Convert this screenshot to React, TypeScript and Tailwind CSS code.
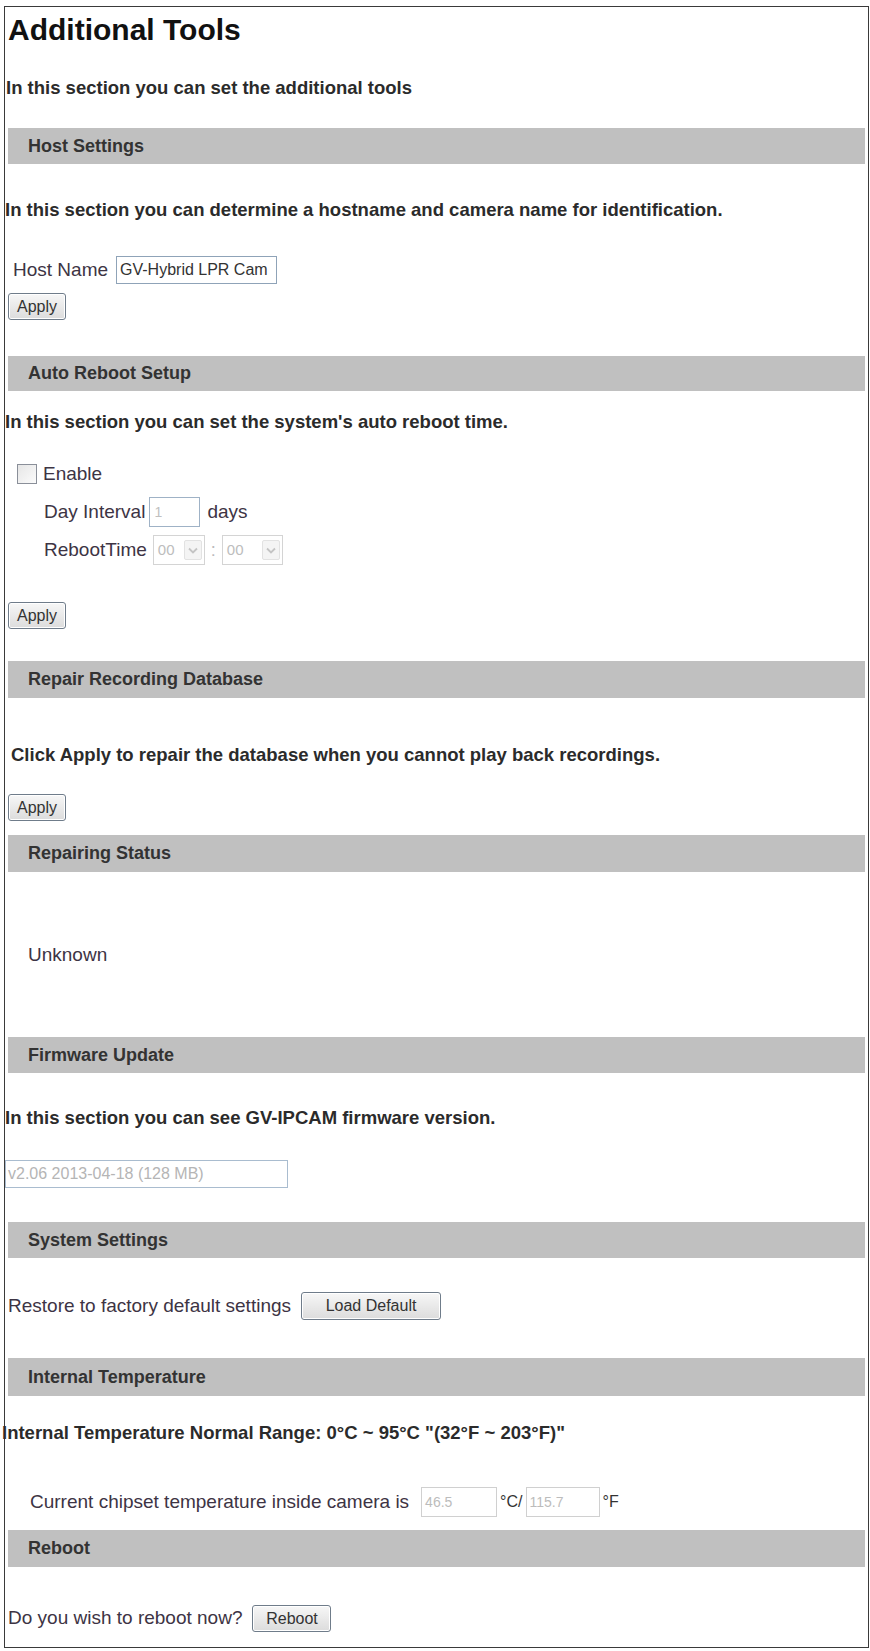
import React from 'react'

const bold = 'font-bold text-[18.5px] text-[#2b2b2b]'
const plain = 'text-[19px] text-[#3d3444]'

const SectionBar = ({ title, className }: { title: string; className?: string }) => (
  <div className={`mx-[3px] flex items-center bg-[#c0c0c0] pl-[20px] ${className ?? ''}`}>
    <span className="font-bold text-[18px] text-[#333]">{title}</span>
  </div>
)

const Button = ({ label, className }: { label: string; className?: string }) => (
  <button
    type="button"
    className={`flex items-center justify-center rounded-[3px] border border-[#6f7c8a] bg-gradient-to-b from-[#f7f7f7] to-[#dcdcdc] text-[16px] text-[#333] shadow-[inset_0_0_0_1px_#fff] ${className ?? ''}`}
  >
    {label}
  </button>
)

const FakeSelect = ({ value, className }: { value: string; className?: string }) => (
  <div
    className={`flex h-full items-center justify-between border border-[#d4d4d4] bg-white pl-[4px] pr-[2px] text-[15px] text-[#bdbdbd] ${className ?? ''}`}
  >
    <span>{value}</span>
    <span className="flex h-[20px] w-[18px] items-center justify-center rounded-[2px] border border-[#e2e2e2] bg-[#f4f4f4]">
      <svg width="10" height="7" viewBox="0 0 10 7">
        <path d="M1 1.5 L5 5.5 L9 1.5" fill="none" stroke="#c4c4c4" strokeWidth="1.8" />
      </svg>
    </span>
  </div>
)

export default function App() {
  return (
    <div className="min-h-[1651px] bg-white" style={{ fontFamily: '"Liberation Sans", Arial, sans-serif' }}>
      <div className="ml-[4px] mt-[6px] w-[865px] border border-[#3a3a3a] pb-[15px]">
        {/* page heading */}
        <div className="flex h-[44px] items-center pl-[3px]">
          <h1 className="font-bold text-[30px] text-[#111]">Additional Tools</h1>
        </div>
        <div className={`mt-[21px] flex h-[32px] items-center pl-[1px] ${bold}`}>
          In this section you can set the additional tools
        </div>

        {/* host settings */}
        <SectionBar title="Host Settings" className="mt-[24px] h-[36px]" />
        <div className={`mt-[30px] flex h-[32px] items-center ${bold}`}>
          In this section you can determine a hostname and camera name for identification.
        </div>
        <div className="mt-[30px] flex h-[28px] items-center pl-[8px]">
          <span className={plain}>Host Name</span>
          <input
            readOnly
            value="GV-Hybrid LPR Cam"
            className="ml-[8px] h-[28px] w-[161px] border border-[#8fa3b8] px-[3px] text-[16px] text-[#333] outline-none"
          />
        </div>
        <Button label="Apply" className="ml-[3px] mt-[9px] h-[27px] w-[58px]" />

        {/* auto reboot */}
        <SectionBar title="Auto Reboot Setup" className="mt-[36px] h-[35px]" />
        <div className={`mt-[15px] flex h-[32px] items-center ${bold}`}>
          In this section you can set the system's auto reboot time.
        </div>
        <label className="mt-[25px] flex h-[22px] items-center pl-[12px]">
          <span className="h-[20px] w-[20px] border border-[#8a8f99] bg-gradient-to-br from-[#e6e6e6] to-[#fbfbfb]" />
          <span className={`ml-[6px] ${plain}`}>Enable</span>
        </label>
        <div className="mt-[12px] flex h-[30px] items-center pl-[39px]">
          <span className={plain}>Day Interval</span>
          <div className="ml-[4px] flex h-[30px] w-[51px] items-center border border-[#9fb2c6] pl-[4px] text-[14px] text-[#c0c0c0]">
            1
          </div>
          <span className={`ml-[7px] ${plain}`}>days</span>
        </div>
        <div className="mt-[8px] flex h-[30px] items-center pl-[39px]">
          <span className={plain}>RebootTime</span>
          <FakeSelect value="00" className="ml-[6px] w-[52px]" />
          <span className="mx-[6px] text-[18px] text-[#bbb]">:</span>
          <FakeSelect value="00" className="w-[61px]" />
        </div>
        <Button label="Apply" className="ml-[3px] mt-[37px] h-[27px] w-[58px]" />

        {/* repair database */}
        <SectionBar title="Repair Recording Database" className="mt-[32px] h-[37px]" />
        <div className={`mt-[41px] flex h-[32px] items-center pl-[6px] ${bold}`}>
          Click Apply to repair the database when you cannot play back recordings.
        </div>
        <Button label="Apply" className="ml-[3px] mt-[23px] h-[27px] w-[58px]" />

        <SectionBar title="Repairing Status" className="mt-[14px] h-[37px]" />
        <div className={`mt-[67px] flex h-[32px] items-center pl-[23px] ${plain}`}>Unknown</div>

        {/* firmware */}
        <SectionBar title="Firmware Update" className="mt-[66px] h-[36px]" />
        <div className={`mt-[29px] flex h-[32px] items-center ${bold}`}>
          In this section you can see GV-IPCAM firmware version.
        </div>
        <div className="mt-[26px] flex h-[28px] w-[283px] items-center border border-[#a9bccf] pl-[2px] text-[16px] text-[#b5b5b5]">
          v2.06 2013-04-18 (128 MB)
        </div>

        {/* system settings */}
        <SectionBar title="System Settings" className="mt-[34px] h-[36px]" />
        <div className="mt-[34px] flex h-[28px] items-center pl-[3px]">
          <span className={plain}>Restore to factory default settings</span>
          <Button label="Load Default" className="ml-[10px] h-[28px] w-[140px]" />
        </div>

        {/* temperature */}
        <SectionBar title="Internal Temperature" className="mt-[38px] h-[38px]" />
        <div className={`-ml-[3px] mt-[21px] flex h-[32px] items-center ${bold}`}>
          Internal Temperature Normal Range: 0°C ~ 95°C "(32°F ~ 203°F)"
        </div>
        <div className="mt-[38px] flex h-[30px] items-center pl-[25px]">
          <span className={plain}>Current chipset temperature inside camera is</span>
          <div className="ml-[12px] flex h-[30px] w-[76px] items-center border border-[#d0d0d0] pl-[3px] text-[14px] text-[#bcbcbc]">
            46.5
          </div>
          <span className="ml-[3px] text-[16px] text-[#333]">°C/</span>
          <div className="ml-[3px] flex h-[30px] w-[74px] items-center border border-[#d0d0d0] pl-[3px] text-[14px] text-[#bcbcbc]">
            115.7
          </div>
          <span className="ml-[3px] text-[16px] text-[#333]">°F</span>
        </div>

        {/* reboot */}
        <SectionBar title="Reboot" className="mt-[13px] h-[37px]" />
        <div className="mt-[38px] flex h-[27px] items-center pl-[3px]">
          <span className={plain}>Do you wish to reboot now?</span>
          <Button label="Reboot" className="ml-[10px] h-[27px] w-[79px]" />
        </div>
      </div>
    </div>
  )
}
